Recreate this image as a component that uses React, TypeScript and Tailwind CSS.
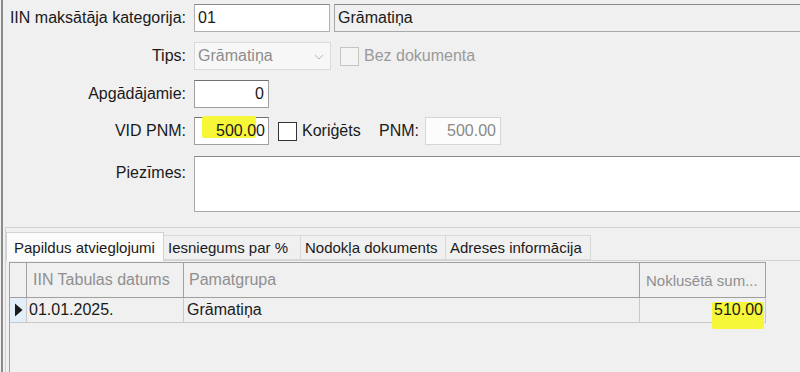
import React from "react";

function Check({ disabled }: { disabled?: boolean }) {
  return (
    <div
      className={
        "w-[19px] h-[19px] border shrink-0 " +
        (disabled ? "border-[#c4c4c4] bg-[#f4f4f4]" : "border-[#333333] bg-white")
      }
    />
  );
}

export default function App() {
  return (
    <div className="w-[800px] h-[372px] bg-[#f0f0f0] overflow-hidden whitespace-nowrap text-[16px] leading-none text-[#1a1a1a] font-['Tahoma','Liberation_Sans',sans-serif]">
      <div className="h-full ml-[1px] border-l-2 border-[#8a8a8a] flex flex-col">
        {/* Row 1 */}
        <div className="mt-[4px] h-[28px] flex items-stretch">
          <div className="w-[183px] flex items-center justify-end">IIN maksātāja kategorija:</div>
          <div className="ml-[8px] w-[136px] bg-white border border-[#b0b0b0] border-t-[#8a8a8a] flex items-center pl-[3px]">01</div>
          <div className="ml-[4px] flex-1 bg-[#f0f0f0] border-y border-l border-[#a8a8a8] border-t-[#8a8a8a] flex items-center pl-[3px]">Grāmatiņa</div>
        </div>
        {/* Row 2 */}
        <div className="mt-[10px] h-[28px] flex items-stretch">
          <div className="w-[183px] flex items-center justify-end">Tips:</div>
          <div className="ml-[8px] w-[137px] bg-[#f7f7f7] border border-[#dadada] flex items-center pl-[3px] pr-[6px] text-[#8d8d8d]">
            <span className="flex-1">Grāmatiņa</span>
            <svg width="10" height="6" viewBox="0 0 10 6" className="mt-[1px]">
              <path d="M1 1 L5 5 L9 1" fill="none" stroke="#b8b8b8" strokeWidth="1" />
            </svg>
          </div>
          <div className="ml-[9px] flex items-center">
            <Check disabled />
            <span className="ml-[5px] text-[#9a9a9a]">Bez dokumenta</span>
          </div>
        </div>
        {/* Row 3 */}
        <div className="mt-[10px] h-[28px] flex items-stretch">
          <div className="w-[183px] flex items-center justify-end">Apgādājamie:</div>
          <div className="ml-[8px] w-[75px] bg-white border border-[#a0a0a0] border-t-[#707070] flex items-center justify-end pr-[4px]">0</div>
        </div>
        {/* Row 4 */}
        <div className="mt-[9px] h-[28px] flex items-stretch">
          <div className="w-[183px] flex items-center justify-end">VID PNM:</div>
          <div className="ml-[8px] w-[75px] bg-white border border-[#a0a0a0] border-t-[#707070] flex items-center justify-end pr-[3px] relative">
            <div className="absolute left-[7px] top-[-2px] w-[54px] h-[22px] bg-[#f7f73a] rounded-[2px]" />
            <span className="relative">500.00</span>
          </div>
          <div className="ml-[9px] w-[101px] flex items-center">
            <Check />
            <span className="ml-[5px]">Koriģēts</span>
          </div>
          <div className="w-[46px] flex items-center">PNM:</div>
          <div className="w-[76px] bg-[#fcfcfc] border border-[#d6d6d6] flex items-center justify-end pr-[4px] text-[#8a8a8a]">500.00</div>
        </div>
        {/* Row 5 */}
        <div className="mt-[11px] h-[56px] flex items-stretch">
          <div className="w-[183px] flex items-start justify-end pt-[9px]">Piezīmes:</div>
          <div className="ml-[8px] flex-1 bg-white border-y border-l border-[#a8a8a8] border-t-[#8a8a8a]" />
        </div>
        {/* Tab control */}
        <div className="mt-[15px] ml-[2px] flex-1 flex flex-col border-l border-t border-[#d2d2d2]">
          <div className="mt-[4px] flex items-end h-[28px] text-[15px]">
            <div className="w-[158px] h-[29px] -mb-[1px] bg-[#fbfbfb] border-x border-t border-[#d2d2d2] flex items-center pl-[7px] relative z-10">
              Papildus atvieglojumi
            </div>
            <div className="w-[137px] h-[25px] bg-[#f0f0f0] border-y border-r border-[#d9d9d9] flex items-center pl-[4px]">Iesniegums par %</div>
            <div className="w-[145px] h-[25px] bg-[#f0f0f0] border-y border-r border-[#d9d9d9] flex items-center pl-[4px]">Nodokļa dokuments</div>
            <div className="w-[145px] h-[25px] bg-[#f0f0f0] border-y border-r border-[#d9d9d9] flex items-center pl-[4px]">Adreses informācija</div>
          </div>
          <div className="flex-1 border-t border-[#d2d2d2] flex flex-col pt-[1px] pl-[3px]">
            <div className="flex-1 w-[757px] border-l border-t border-[#a0a0a0] flex flex-col">
              <div className="h-[35px] flex border-b border-[#a0a0a0] text-[#8f8f8f]">
                <div className="w-[17px] border-r border-[#a0a0a0]" />
                <div className="w-[157px] border-r border-[#a0a0a0] flex items-center pl-[6px]">IIN Tabulas datums</div>
                <div className="w-[456px] border-r border-[#a0a0a0] flex items-center pl-[5px]">Pamatgrupa</div>
                <div className="w-[126px] border-r border-[#a0a0a0] flex items-center pl-[6px] text-[15px]">Noklusētā sum...</div>
              </div>
              <div className="h-[25px] flex border-b border-[#c8c8c8]">
                <div className="w-[17px] border-r border-[#c8c8c8] bg-[#e4eef9] flex items-center justify-center">
                  <svg width="9" height="14" viewBox="0 0 9 14">
                    <path d="M1 0.5 L8.5 7 L1 13.5 Z" fill="#1a1a1a" />
                  </svg>
                </div>
                <div className="w-[157px] border-r border-[#c8c8c8] flex items-center pl-[2px]">01.01.2025.</div>
                <div className="w-[456px] border-r border-[#c8c8c8] flex items-center pl-[3px]">Grāmatiņa</div>
                <div className="w-[126px] border-r border-[#c8c8c8] flex items-center justify-end pr-[2px] relative">
                  <div className="absolute right-[1px] top-[4px] w-[52px] h-[27px] bg-[#f7f73a] rounded-[2px]" />
                  <span className="relative">510.00</span>
                </div>
              </div>
            </div>
          </div>
        </div>
      </div>
    </div>
  );
}
